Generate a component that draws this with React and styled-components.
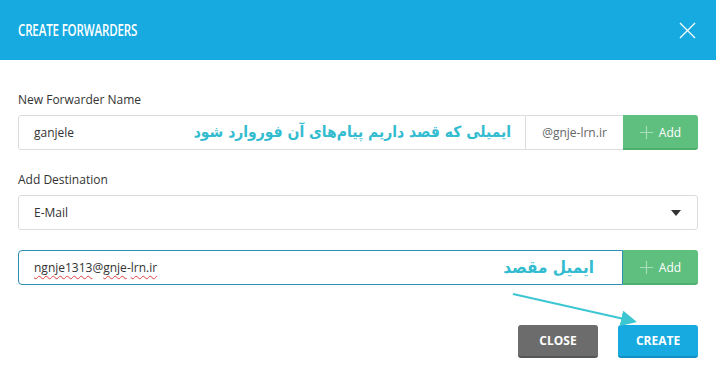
import React from 'react';
import styled, { createGlobalStyle } from 'styled-components';

const GlobalStyle = createGlobalStyle`
  html, body {
    margin: 0;
    padding: 0;
    background: #ffffff;
  }
  body {
    font-family: "Open Sans", "DejaVu Sans", sans-serif;
    color: #333;
  }
`;

function App() {
  return (
    <>
      <GlobalStyle />
      <Modal>
        <Header>
          <Title>CREATE FORWARDERS</Title>
          <CloseIcon viewBox="0 0 18 18">
            <path d="M1 1 L17 17 M17 1 L1 17" stroke="#fff" strokeWidth="1.3" fill="none" />
          </CloseIcon>
        </Header>
        <Body>
          <Label>New Forwarder Name</Label>
          <Row>
            <TextBox>
              <span>ganjele</span>
              <Hint>ایمیلی که قصد داریم پیام‌های آن فوروارد شود</Hint>
            </TextBox>
            <Domain>@gnje-lrn.ir</Domain>
            <AddButton>
              <PlusIcon viewBox="0 0 14 14">
                <path d="M7 0 V14 M0 7 H14" stroke="#a9e0bb" strokeWidth="1.2" />
              </PlusIcon>
              Add
            </AddButton>
          </Row>

          <Label $top={22}>Add Destination</Label>
          <Select>
            <span>E-Mail</span>
            <Caret />
          </Select>

          <Row $top={20}>
            <TextBox $focused>
              <span>
                <Typo>ngnje1313</Typo>@<Typo>gnje</Typo>-<Typo>lrn.ir</Typo>
              </span>
              <Hint $small>ایمیل مقصد</Hint>
            </TextBox>
            <AddButton>
              <PlusIcon viewBox="0 0 14 14">
                <path d="M7 0 V14 M0 7 H14" stroke="#a9e0bb" strokeWidth="1.2" />
              </PlusIcon>
              Add
            </AddButton>
          </Row>

          <Footer>
            <Button $variant="close">CLOSE</Button>
            <Button $variant="create">CREATE</Button>
          </Footer>

          <Arrow viewBox="0 0 130 36">
            <defs>
              <marker id="head" markerWidth="8" markerHeight="8" refX="6" refY="4" orient="auto">
                <path d="M0 0 L8 4 L0 8 Z" fill="#3cc6d2" />
              </marker>
            </defs>
            <path d="M2 3 L122 30" stroke="#3cc6d2" strokeWidth="2" fill="none" markerEnd="url(#head)" />
          </Arrow>
        </Body>
      </Modal>
    </>
  );
}

export default App;

const Modal = styled.div`
  width: 716px;
  height: 369px;
  background: #fff;
  position: relative;
  overflow: hidden;
`;

const Header = styled.div`
  height: 60px;
  background: #16aae0;
  display: flex;
  align-items: center;
  justify-content: space-between;
  padding: 0 20px 0 18px;
  box-sizing: border-box;
`;

const Title = styled.div`
  color: #fff;
  font-size: 16px;
  font-weight: 600;
  transform: scaleX(0.72);
  transform-origin: left center;
  letter-spacing: -0.2px;
  margin-top: -1px;
`;

const CloseIcon = styled.svg`
  width: 17px;
  height: 17px;
`;

const Body = styled.div`
  padding: 32px 18px 0 18px;
  position: relative;
`;

const Label = styled.div`
  font-size: 12px;
  line-height: 16px;
  color: #333;
  margin-top: ${p => p.$top || 0}px;
  margin-bottom: 7px;
`;

const Row = styled.div`
  display: flex;
  height: 35px;
  margin-top: ${p => p.$top || 0}px;
`;

const TextBox = styled.div`
  flex: 1;
  display: flex;
  align-items: center;
  justify-content: space-between;
  padding: 0 14px 0 15px;
  font-size: 12px;
  color: #333;
  border: 1px solid ${p => (p.$focused ? '#2b8fb1' : '#dcdcdc')};
  border-radius: ${p => (p.$focused ? '4px 0 0 4px' : '3px 0 0 3px')};
  box-sizing: border-box;
`;

const Hint = styled.span`
  direction: rtl;
  font-family: "DejaVu Sans Condensed", "DejaVu Sans", sans-serif;
  font-weight: bold;
  font-size: ${p => (p.$small ? '17px' : '15.5px')};
  color: #33bccf;
  margin-right: ${p => (p.$small ? '14px' : '0')};
  padding-bottom: 1px;
`;

const Typo = styled.span`
  text-decoration: underline wavy #e04040;
  text-decoration-thickness: 1px;
  text-underline-offset: 3px;
`;

const Domain = styled.div`
  width: 97px;
  display: flex;
  align-items: center;
  justify-content: center;
  font-size: 12px;
  color: #666;
  border-top: 1px solid #dcdcdc;
  border-bottom: 1px solid #dcdcdc;
  box-sizing: border-box;
`;

const AddButton = styled.div`
  width: 75px;
  display: flex;
  align-items: center;
  justify-content: center;
  gap: 6px;
  font-size: 12px;
  color: #fff;
  background: #5fbf7f;
  border-bottom: 2px solid #4faf6f;
  border-radius: 0 3px 3px 0;
  box-sizing: border-box;
  padding-top: 2px;
`;

const PlusIcon = styled.svg`
  width: 13px;
  height: 13px;
`;

const Select = styled.div`
  height: 35px;
  display: flex;
  align-items: center;
  justify-content: space-between;
  padding: 0 16px 0 15px;
  font-size: 12px;
  color: #333;
  border: 1px solid #dcdcdc;
  border-radius: 3px;
  box-sizing: border-box;
`;

const Caret = styled.span`
  width: 0;
  height: 0;
  border-left: 5px solid transparent;
  border-right: 5px solid transparent;
  border-top: 6px solid #333;
`;

const Footer = styled.div`
  display: flex;
  justify-content: flex-end;
  gap: 20px;
  margin-top: 40px;
`;

const Button = styled.div`
  width: 80px;
  height: 33px;
  display: flex;
  align-items: center;
  justify-content: center;
  font-size: 12px;
  font-weight: 700;
  color: #fff;
  border-radius: 3px;
  box-sizing: border-box;
  background: ${p => (p.$variant === 'close' ? '#6c6c6c' : '#16aae0')};
  border-bottom: 2px solid ${p => (p.$variant === 'close' ? '#565656' : '#1290c2')};
`;

const Arrow = styled.svg`
  position: absolute;
  left: 511px;
  top: 231px;
  width: 130px;
  height: 36px;
  overflow: visible;
`;
